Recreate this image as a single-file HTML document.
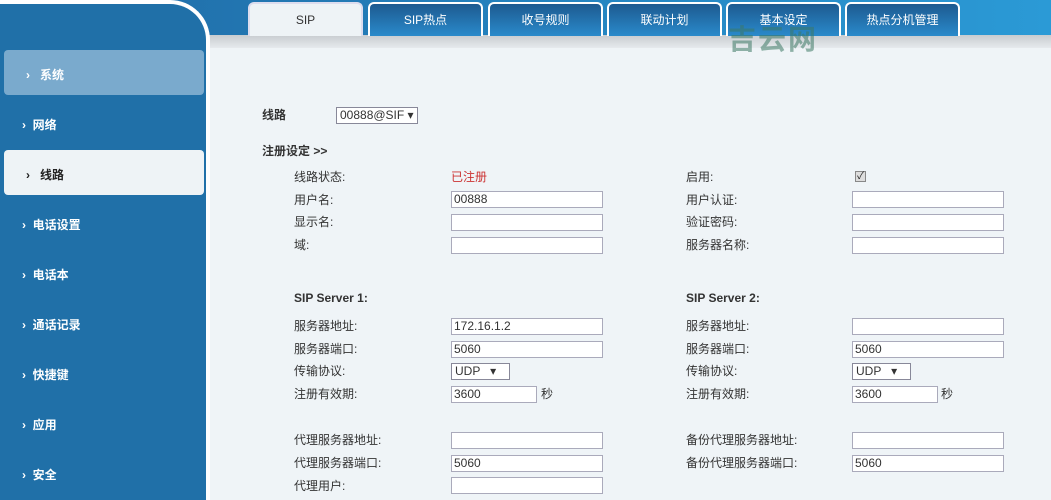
<!DOCTYPE html><html><head><meta charset="utf-8"><style>
*{margin:0;padding:0;box-sizing:border-box}
body{width:1051px;height:500px;overflow:hidden;background:#eff4f7;font-family:"Liberation Sans","Noto Sans CJK SC",sans-serif;font-size:12px;color:#333;position:relative}
.top{position:absolute;left:0;top:0;width:1051px;height:36px;background:linear-gradient(90deg,#1f6aa5,#2b9ad6)}
.band{position:absolute;left:207px;top:35px;width:844px;height:13px;background:linear-gradient(#c8ccd0,#e6eaed)}
.side{position:absolute;left:0;top:0;width:210px;height:500px;background:#2070a8;border-top-right-radius:40px;border:4px solid #fff;border-left:none;border-bottom:none}
.tab{position:absolute;top:2px;height:34px;width:115px;border:2px solid #fff;border-bottom:none;border-radius:6px 6px 0 0;background:linear-gradient(#1d5a90,#2a8acb);color:#fff;text-align:center;line-height:32px;font-size:12px}
.tab.a{background:#eef3f6;color:#333;border-color:#dde}
.it{position:absolute;left:22px;color:#fff;font-weight:bold;font-size:12px}
.hl{position:absolute;left:4px;width:200px;height:45px;border-radius:4px}
.a1{position:absolute;font-size:12px;color:#333;margin-top:-2px}
.in{position:absolute;width:152px;height:17px;background:#fff;border:1px solid #aab;font-size:12px;line-height:15px;padding-left:2px}
.sel{position:absolute;height:17px;background:#fff;border:1px solid #889;font-size:12px;line-height:15px;padding-left:3px}
b{font-weight:bold}
</style></head><body>
<div class="top"></div>
<div class="band"></div>
<div class="tab a" style="left:248px">SIP</div>
<div class="tab" style="left:368px">SIP热点</div>
<div class="tab" style="left:488px">收号规则</div>
<div class="tab" style="left:607px">联动计划</div>
<div class="tab" style="left:726px">基本设定</div>
<div class="tab" style="left:845px">热点分机管理</div>
<div style="position:absolute;left:728px;top:18px;font-size:28px;font-weight:bold;color:rgba(60,120,100,.55);letter-spacing:2px">吉云网</div>
<div class="side"></div>
<div class="hl" style="top:50px;background:#7aaacd"></div>
<div class="hl" style="top:150px;background:#eef3f6"></div>
<div class="it" style="top:66px;left:26px">›&nbsp;&nbsp;&nbsp;系统</div>
<div class="it" style="top:116px">›&nbsp;&nbsp;网络</div>
<div class="it" style="top:166px;left:26px;color:#222">›&nbsp;&nbsp;&nbsp;线路</div>
<div class="it" style="top:216px">›&nbsp;&nbsp;电话设置</div>
<div class="it" style="top:266px">›&nbsp;&nbsp;电话本</div>
<div class="it" style="top:316px">›&nbsp;&nbsp;通话记录</div>
<div class="it" style="top:366px">›&nbsp;&nbsp;快捷键</div>
<div class="it" style="top:416px">›&nbsp;&nbsp;应用</div>
<div class="it" style="top:466px">›&nbsp;&nbsp;安全</div>

<div class="a1" style="left:262px;top:108px"><b>线路</b></div>
<div class="sel" style="left:336px;top:107px;width:82px">00888@SIF ▾</div>
<div class="a1" style="left:262px;top:144px"><b>注册设定 &gt;&gt;</b></div>

<div class="a1" style="left:294px;top:170px">线路状态:</div><div class="a1" style="left:451px;top:170px;color:#c33">已注册</div>
<div class="a1" style="left:294px;top:193px">用户名:</div><div class="in" style="left:451px;top:191px">00888</div>
<div class="a1" style="left:294px;top:215px">显示名:</div><div class="in" style="left:451px;top:214px"></div>
<div class="a1" style="left:294px;top:238px">域:</div><div class="in" style="left:451px;top:237px"></div>

<div class="a1" style="left:686px;top:170px">启用:</div><div style="position:absolute;left:855px;top:171px;width:11px;height:11px;border:1px solid #888;background:#ddd;font-size:10px;line-height:9px;text-align:center;color:#222">✓</div>
<div class="a1" style="left:686px;top:193px">用户认证:</div><div class="in" style="left:852px;top:191px"></div>
<div class="a1" style="left:686px;top:215px">验证密码:</div><div class="in" style="left:852px;top:214px"></div>
<div class="a1" style="left:686px;top:238px">服务器名称:</div><div class="in" style="left:852px;top:237px"></div>

<div class="a1" style="left:294px;top:293px"><b>SIP Server 1:</b></div>
<div class="a1" style="left:686px;top:293px"><b>SIP Server 2:</b></div>

<div class="a1" style="left:294px;top:319px">服务器地址:</div><div class="in" style="left:451px;top:318px">172.16.1.2</div>
<div class="a1" style="left:294px;top:342px">服务器端口:</div><div class="in" style="left:451px;top:341px">5060</div>
<div class="a1" style="left:294px;top:364px">传输协议:</div><div class="sel" style="left:451px;top:363px;width:59px">UDP &nbsp;&nbsp;▾</div>
<div class="a1" style="left:294px;top:387px">注册有效期:</div><div class="in" style="left:451px;top:386px;width:86px">3600</div><div class="a1" style="left:541px;top:387px">秒</div>

<div class="a1" style="left:686px;top:319px">服务器地址:</div><div class="in" style="left:852px;top:318px"></div>
<div class="a1" style="left:686px;top:342px">服务器端口:</div><div class="in" style="left:852px;top:341px">5060</div>
<div class="a1" style="left:686px;top:364px">传输协议:</div><div class="sel" style="left:852px;top:363px;width:59px">UDP &nbsp;&nbsp;▾</div>
<div class="a1" style="left:686px;top:387px">注册有效期:</div><div class="in" style="left:852px;top:386px;width:86px">3600</div><div class="a1" style="left:941px;top:387px">秒</div>

<div class="a1" style="left:294px;top:433px">代理服务器地址:</div><div class="in" style="left:451px;top:432px"></div>
<div class="a1" style="left:294px;top:456px">代理服务器端口:</div><div class="in" style="left:451px;top:455px">5060</div>
<div class="a1" style="left:294px;top:479px">代理用户:</div><div class="in" style="left:451px;top:477px"></div>
<div class="a1" style="left:686px;top:433px">备份代理服务器地址:</div><div class="in" style="left:852px;top:432px"></div>
<div class="a1" style="left:686px;top:456px">备份代理服务器端口:</div><div class="in" style="left:852px;top:455px">5060</div>
</body></html>
